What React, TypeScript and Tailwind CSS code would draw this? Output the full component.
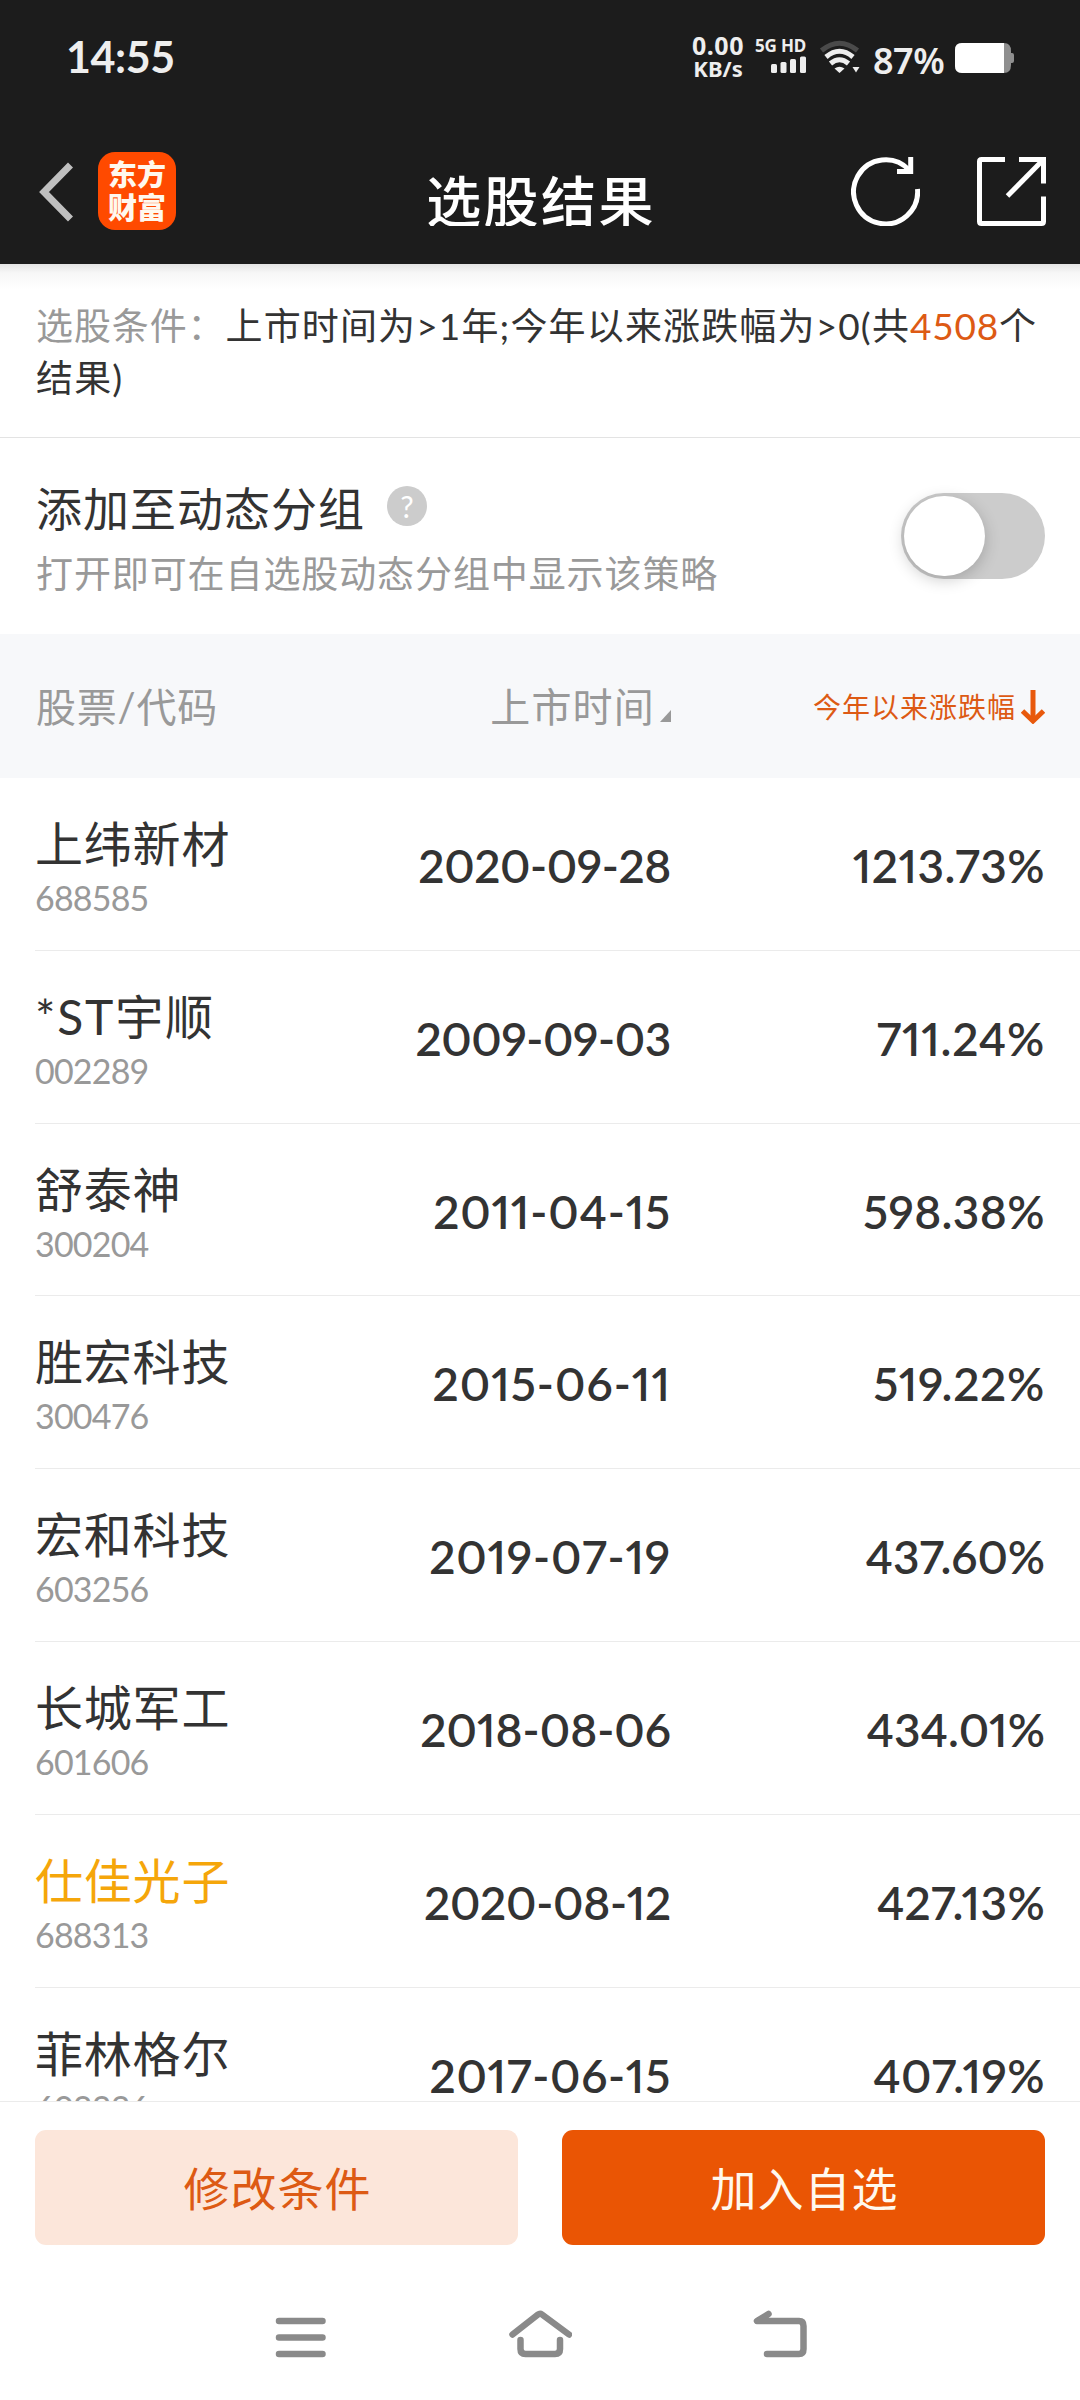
import React, { useState } from 'react';

// Screening results, sorted by gain since the start of the year
const stocks = [
  { name: "上纬新材", code: "688585", listed: "2020-09-28", change: "1213.73%", nameTracking: "tracking-[0.8px]", listedTracking: "tracking-[-0.4px]", changeTracking: "tracking-[0.4px]" },
  { name: "*ST宇顺", code: "002289", listed: "2009-09-03", change: "711.24%", nameTracking: "tracking-[1.8px]", listedTracking: "tracking-[-0.4px]", changeTracking: "tracking-[0.7px]" },
  { name: "舒泰神", code: "300204", listed: "2011-04-15", change: "598.38%", nameTracking: "tracking-[0.8px]", listedTracking: "tracking-[0.8px]", changeTracking: "tracking-[0.4px]" },
  { name: "胜宏科技", code: "300476", listed: "2015-06-11", change: "519.22%", nameTracking: "tracking-[0.8px]", listedTracking: "tracking-[1px]", changeTracking: "tracking-[0.7px]" },
  { name: "宏和科技", code: "603256", listed: "2019-07-19", change: "437.60%", nameTracking: "tracking-[0.8px]", listedTracking: "tracking-[0.8px]", changeTracking: "tracking-[-0.1px]" },
  { name: "长城军工", code: "601606", listed: "2018-08-06", change: "434.01%", nameTracking: "tracking-[0.8px]", listedTracking: "tracking-[0px]", changeTracking: "tracking-[0px]" },
  { name: "仕佳光子", code: "688313", listed: "2020-08-12", change: "427.13%", nameTracking: "tracking-[0.8px]", listedTracking: "tracking-[-0.3px]", changeTracking: "tracking-[0.3px]", watched: true },
  { name: "菲林格尔", code: "603226", listed: "2017-06-15", change: "407.19%", nameTracking: "tracking-[0.8px]", listedTracking: "tracking-[0.7px]", changeTracking: "tracking-[0.4px]" }
];

interface StockRowProps {
  name: string;
  code: string;
  listed: string;
  change: string;
  nameTracking: string;
  listedTracking: string;
  changeTracking: string;
  watched?: boolean;
}

const StatusBar: React.FC = () => {
  return (
    <div className="flex h-[114px] items-start justify-between pl-[66px] pr-[66px] text-[#eeeeee]">
      <span className="mt-[31px] text-[43px] font-bold leading-[52px] tracking-[-0.4px]">14:55</span>
      <div className="flex items-start">
        <div className="mt-[34px] flex w-[56px] flex-col items-center font-['Noto_Sans'] text-[25px] font-bold leading-[23px]">
          <span className="tracking-[0.5px]">0.00</span>
          <span className="text-[22px] leading-[22px]">KB/s</span>
        </div>
        <div className="ml-[10px] mt-[38px] flex w-[50px] flex-col items-end">
          <span className="whitespace-nowrap font-['Noto_Sans'] text-[17px] font-bold leading-[16px] tracking-[-0.2px]">5G HD</span>
          <svg className="mt-[2px]" width="36" height="17" viewBox="0 0 36 17" fill="#eeeeee">
            <rect x="1" y="8" width="6" height="9" rx="1.5" />
            <rect x="10.5" y="6" width="6" height="11" rx="1.5" />
            <rect x="20" y="3" width="6" height="14" rx="1.5" />
            <rect x="30" y="0.5" width="6" height="16.5" rx="1.5" />
          </svg>
        </div>
        <svg className="ml-[13px] mt-[40px]" width="42" height="34" viewBox="0 0 42 34" fill="none" strokeWidth="5">
          <path d="M2.5 10.5 Q20.5 -4 38.5 10.5" stroke="#4a4a4a" />
          <path d="M7 17 Q20.5 5.500 34 17" stroke="#eeeeee" />
          <path d="M11.5 23.5 Q20.5 16 29.5 23.5" stroke="#eeeeee" />
          <path d="M15.5 28.5 Q20.5 25 25.5 28.5 L20.5 33 Z" fill="#eeeeee" />
          <path d="M33.5 27 h7 l-3.5 5.5 z" fill="#eeeeee" />
        </svg>
        <span className="ml-[12px] mt-[39px] w-[74px] whitespace-nowrap font-['Noto_Sans'] text-[36px] font-semibold leading-[44px] tracking-[-0.5px]">87%</span>
        <svg className="ml-[8px] mt-[43px]" width="59" height="30" viewBox="0 0 59 30">
          <path d="M7 0 H49 Q56 0 56 8 V10 H57 Q59 10 59 12 V18 Q59 20 57 20 H56 V22 Q56 30 49 30 H7 Q0 30 0 23 V7 Q0 0 7 0 Z" fill="#8f8f8f" />
          <path d="M7 0 H49 V30 H7 Q0 30 0 23 V7 Q0 0 7 0 Z" fill="#ffffff" />
        </svg>
      </div>
    </div>
  );
};

const TitleBar: React.FC = () => {
  return (
    <div className="grid h-[150px] grid-cols-3 items-start px-[34px]">
      <div className="flex">
        <svg className="ml-[5px] mt-[48px]" width="36" height="60" viewBox="0 0 36 60" fill="none">
          <path d="M31.5 3 L5 30 L31.5 57" stroke="#bfbfbf" strokeWidth="7" />
        </svg>
        <div className="ml-[23px] mt-[38px] flex h-[78px] w-[78px] flex-col items-center justify-center rounded-[17px] bg-[#ff4a00] text-[29px] font-black leading-[33px] text-[#fff8ee]">
          <span>东方</span>
          <span>财富</span>
        </div>
      </div>
      <h1 className="mt-[47px] h-[65px] overflow-hidden whitespace-nowrap pl-[2px] text-center text-[55px] font-medium leading-[80px] tracking-[2.4px] text-white">
        选股结果
      </h1>
      <div className="mt-[43px] flex justify-end">
        <svg width="69" height="69" viewBox="0 0 69 69" fill="none" stroke="#ffffff" strokeWidth="5">
          <path d="M66.5 32 A32 32 0 1 1 58 13" />
          <path d="M59.7 0 V14.5 H46" />
        </svg>
        <svg className="ml-[57px]" width="69" height="69" viewBox="0 0 69 69" fill="none" stroke="#ffffff" strokeWidth="5">
          <path d="M28 2.5 H4.5 Q2.5 2.5 2.5 4.5 V64.5 Q2.5 66.5 4.5 66.5 H64.5 Q66.5 66.5 66.5 64.5 V39.5" />
          <path d="M42 2.5 H66.5 V26.5" />
          <path d="M65.5 3.5 L30.5 39" />
        </svg>
      </div>
    </div>
  );
};

const StockRow: React.FC<StockRowProps> = ({
  name,
  code,
  listed,
  change,
  nameTracking,
  listedTracking,
  changeTracking,
  watched = false
}) => {
  return (
    <div className="ml-[35px] flex h-[172.8px] shrink-0 border-b border-[#ebebeb] pr-[35px]">
      <div className="w-[260px] pt-[36px]">
        <div className={`text-[48px] leading-[60px] ${nameTracking} ${watched ? "text-[#f5a60a]" : "text-[#333333]"}`}>{name}</div>
        <div className="mt-[2px] text-[34px] leading-[44px] tracking-[-0.8px] text-[#999999]">{code}</div>
      </div>
      <div className={`w-[376px] pt-[60px] text-right text-[46px] font-semibold leading-[56px] proportional-nums text-[#333333] [font-kerning:none] ${listedTracking}`}>{listed}</div>
      <div className={`flex-1 pt-[60px] text-right text-[46px] font-semibold leading-[56px] proportional-nums text-[#333333] ${changeTracking}`}>{change}</div>
    </div>
  );
};

const App: React.FC = () => {
  const [dynamicGroup, setDynamicGroup] = useState(false);

  return (
    <div className="flex h-[2400px] w-[1080px] flex-col overflow-hidden bg-white font-['Lato','Noto_Sans_CJK_SC',sans-serif]">
      <header className="h-[264px] shrink-0 bg-[#1c1c1c]">
        <StatusBar />
        <TitleBar />
      </header>

      {/* Screening condition */}
      <section className="h-[174px] shrink-0 border-b border-[#e3e3e3] bg-linear-to-b from-[#e4e4e4] via-[#f7f7f7] via-[9px] to-white to-[26px] pl-[36px] pt-[36px] text-[37px] leading-[52px] tracking-[1.15px] text-[#333333]">
        <p className="whitespace-nowrap">
          <span className="tracking-[0.9px] text-[#999999]">选股条件：</span>上市时间为&gt;1年;今年以来涨跌幅为&gt;0(共<span className="tracking-[0.8px] text-[#dd5a14]">4508</span>个
        </p>
        <p>结果)</p>
      </section>

      {/* Dynamic group switch */}
      <section className="flex h-[196px] shrink-0 justify-between px-[35px]">
        <div className="pl-px pt-[41px]">
          <div className="flex">
            <h2 className="text-[46px] leading-[60px] tracking-[1px] text-[#333333]">添加至动态分组</h2>
            <span className="ml-[22px] mt-[7px] flex h-[40px] w-[40px] items-center justify-center rounded-full bg-[#cccccc] text-[30px] leading-[40px] text-white">?</span>
          </div>
          <p className="mt-[9px] text-[37px] leading-[52px] tracking-[0.9px] text-[#999999]">打开即可在自选股动态分组中显示该策略</p>
        </div>
        <button
          className="mt-[55px] flex h-[86px] w-[144px] items-center rounded-full bg-[#cccccc] p-[3px]"
          onClick={() => setDynamicGroup(!dynamicGroup)}
        >
          <span className={`h-[80px] w-[81px] rounded-full bg-white shadow-[0_4px_16px_rgba(0,0,0,0.2)] ${dynamicGroup ? "ml-auto" : ""}`} />
        </button>
      </section>

      {/* Column headings */}
      <div className="flex h-[144px] shrink-0 items-center bg-[#f7f8fa] px-[35px] pt-[2px] text-[40px] tracking-[1.2px] text-[#999999]">
        <span className="w-[260px] pl-px tracking-[0.8px]">股票/代码</span>
        <span className="flex w-[376px] items-center justify-end">
          上市时间
          <svg className="ml-[5px] mt-[18px]" width="11" height="12" viewBox="0 0 11 12">
            <path d="M11 0 V12 H0 Z" fill="#999999" />
          </svg>
        </span>
        <span className="flex flex-1 items-center justify-end text-[28px] tracking-[1px] text-[#dd5a14]">
          今年以来涨跌幅
          <svg className="ml-[5px]" width="24" height="34" viewBox="0 0 24 34" fill="none" stroke="#e8590c" strokeWidth="5">
            <path d="M12 0 V30" />
            <path d="M1.5 21 L12 31 L22.5 21" />
          </svg>
        </span>
      </div>

      <main className="flex h-[1323px] shrink-0 flex-col overflow-hidden">
        {stocks.map((stock) => (
          <StockRow key={stock.code} {...stock} />
        ))}
      </main>

      <div className="flex h-[150px] shrink-0 gap-[44px] border-t border-[#ebebeb] px-[35px] pt-[28px] text-[46px] tracking-[1px]">
        <button className="h-[115px] flex-1 rounded-[11px] bg-[#fce6da] pl-[2px] pt-[2px] text-[#dd5a14]">修改条件</button>
        <button className="h-[115px] flex-1 rounded-[11px] bg-[#ea5504] pl-[2px] pt-[2px] text-[#fff8ee]">加入自选</button>
      </div>

      {/* System navigation */}
      <nav className="flex flex-1 items-start pl-[275px] pt-[58px]">
        <svg width="51" height="50" viewBox="0 0 51 50" fill="none" stroke="#8a8a8a" strokeWidth="6.5" strokeLinecap="round">
          <path d="M4 12 H47.5 M4 28.5 H47.5 M4 45 H47.5" />
        </svg>
        <svg className="ml-[182px]" width="64" height="50" viewBox="0 0 64 50" fill="none" stroke="#8a8a8a" strokeWidth="6.5" strokeLinecap="round" strokeLinejoin="round">
          <path d="M4.5 25.5 L30 5.5 Q32 4 34 5.5 L61 25.5" />
          <path d="M12.5 31 V40 Q12.5 45 17.5 45 H47 Q52 45 52 40 V31" />
        </svg>
        <svg className="ml-[181px]" width="55" height="50" viewBox="0 0 55 50" fill="none" stroke="#8a8a8a" strokeWidth="6.5" strokeLinecap="round" strokeLinejoin="round">
          <path d="M15.5 5 L4 12 H46 Q50.5 12 50.5 17 V40 Q50.5 45 46 45 H14" />
        </svg>
      </nav>
    </div>
  );
};

export default App;
